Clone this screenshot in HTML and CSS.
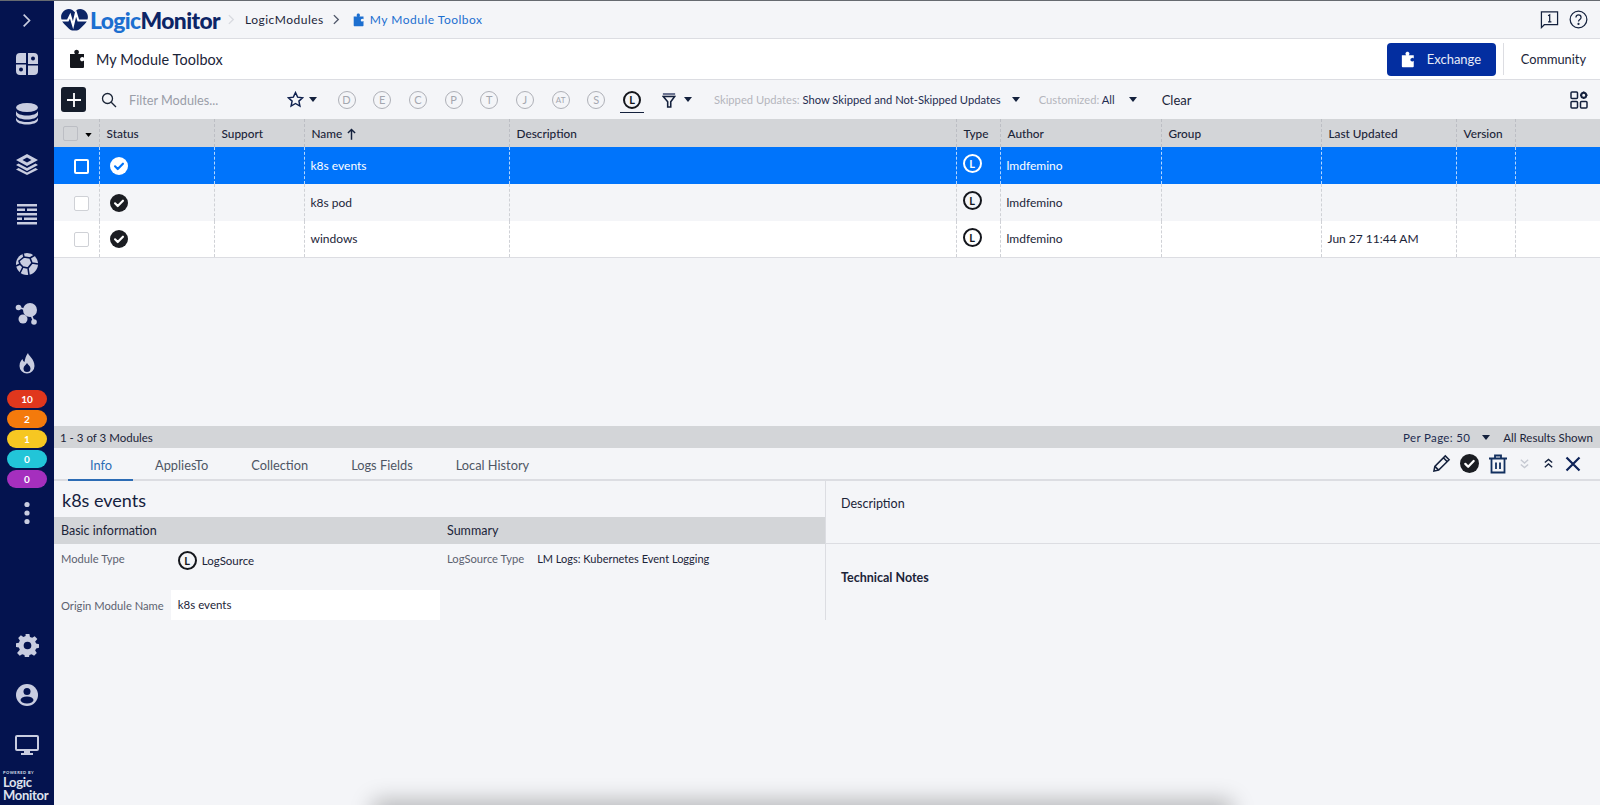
FILE: index.html
```html
<!DOCTYPE html>
<html lang="en">
<head>
  <meta charset="UTF-8">
  <title>My Module Toolbox - LogicMonitor</title>
  <link rel="stylesheet" href="styles.css">
</head>
<body>
  <svg class="defs" width="0" height="0">
    <symbol id="puzzle" viewBox="0 0 20 20">
      <path d="M1 5h5.200c-.9-.9-1-1.700-.9-2.300C5.500 1.500 6.600.800 7.600.800s2.100.7 2.300 1.900c.1.600 0 1.400-.9 2.300h6v3.800c-.5-.5-1.200-.8-1.900-.7-1.100.1-2 1-2 2.100s.9 2 2 2.100c.7.100 1.400-.2 1.900-.7V18a1 1 0 0 1-1 1H2a1 1 0 0 1-1-1z"/>
    </symbol>
    <symbol id="check" viewBox="0 0 20 20">
      <path d="M5.600 10.400l3 3 5.800-6" fill="none" stroke-width="2.400" stroke-linecap="round" stroke-linejoin="round"/>
    </symbol>
    <symbol id="caret" viewBox="0 0 8 5">
      <path d="M0 0h8L4 5z"/>
    </symbol>
  </svg>

  <nav class="sidebar">
    <div class="side-top">
      <svg viewBox="0 0 12 18" width="10" height="15" fill="none" stroke="#c9cde0" stroke-width="2"><path d="M2 2l7 7-7 7"/></svg>
    </div>
    <div class="side-item">
      <svg viewBox="0 0 24 24" width="24" height="24"><path d="M1 5a4 4 0 0 1 4-4h6v10H1zM13 1h6a4 4 0 0 1 4 4v7H13zM1 12.500h10V23H5a4 4 0 0 1-4-4zM13 13.500h10V19a4 4 0 0 1-4 4h-6z"/><circle cx="18" cy="6.500" r="2" fill="#04134f"/><circle cx="6" cy="17.500" r="2" fill="#04134f"/></svg>
    </div>
    <div class="side-item">
      <svg viewBox="0 0 24 24" width="24" height="24"><ellipse cx="12" cy="5.500" rx="11" ry="4.500"/><path d="M1 9c1 3 5.500 4.500 11 4.500S22 12 23 9v4c-1 3-5.500 4.500-11 4.500S2 16 1 13z"/><path d="M1 15.500c1 3 5.500 4.500 11 4.500s10-1.500 11-4.500V18c-.5 3-5.500 4.500-11 4.500S1.500 21 1 18z"/></svg>
    </div>
    <div class="side-item">
      <svg viewBox="0 0 24 24" width="24" height="24"><path d="M12 2l11 6-11 6L1 8zM12 5.500L7.500 8l4.500 2.500L16.500 8z" fill-rule="evenodd"/><path d="M3.500 11.500L12 16l8.500-4.500 2.500 1.500-11 6-11-6z"/><path d="M3.500 16L12 20.500 20.500 16l2.500 1.500-11 5.500-11-5.500z"/></svg>
    </div>
    <div class="side-item">
      <svg viewBox="0 0 24 24" width="24" height="24"><path d="M2 2h20v2.500H2zM2 6.500h8V9H2zM12 6.500h10V9H12zM2 11h20v2.500H2zM2 15.500h5V18H2zM9 15.500h13V18H9zM2 20h20v2.500H2z"/></svg>
    </div>
    <div class="side-item">
      <svg viewBox="0 0 24 24" width="24" height="24"><circle cx="12" cy="12" r="11"/><path d="M4 9l5-4 6 1 2 5-4 5-5-1-3-3zM9 5l-1-4M15 6l5-3M17 11l6 1M13 16l1 7M8 15l-3 6M5 12L1 14" fill="none" stroke="#04134f" stroke-width="1.600"/></svg>
    </div>
    <div class="side-item">
      <svg viewBox="0 0 24 24" width="24" height="24"><circle cx="15" cy="8" r="7"/><circle cx="8" cy="17" r="4.500"/><circle cx="3.500" cy="5.500" r="2.800"/><circle cx="19" cy="20" r="2.800"/><path d="M3.500 5.500L12 8M15 10l4 10" stroke="#c9cde0" stroke-width="1.800"/></svg>
    </div>
    <div class="side-item">
      <svg viewBox="0 0 24 24" width="24" height="24"><path fill-rule="evenodd" d="M13 1c.5 3 6.500 6 6.500 13a7.500 7.500 0 0 1-15 0c0-4 2-6 3-7 .3 1.500 1 2.500 2 3 .5-3 1.500-6.500 3.500-9zM12 11c-.8 1.500-3.500 3-3.500 5.500a3.500 3.500 0 0 0 7 0c0-2.500-2.700-4-3.500-5.500z"/></svg>
    </div>
    <div class="badges">
      <span class="badge red">10</span>
      <span class="badge orange">2</span>
      <span class="badge yellow">1</span>
      <span class="badge cyan">0</span>
      <span class="badge purple">0</span>
    </div>
    <div class="side-item">
      <svg viewBox="0 0 6 24" width="6" height="24"><circle cx="3" cy="3.500" r="2.600"/><circle cx="3" cy="12" r="2.600"/><circle cx="3" cy="20.500" r="2.600"/></svg>
    </div>
    <div class="side-bottom">
      <div class="side-item">
        <svg viewBox="0 0 24 24" width="23" height="23"><path fill-rule="evenodd" d="M10 0h4l.6 3 2.300 1 2.600-1.700 2.800 2.800L20 7.700l1 2.300 3 .6v3.800l-3 .6-1 2.300 1.700 2.600-2.800 2.800-2.600-1.700-2.300 1-.6 3h-4l-.6-3-2.300-1-2.600 1.700-2.800-2.800L4 16.400 3 14.100l-3-.6V9.700l3-.6 1-2.300L2.300 4.100l2.800-2.800L7.700 3l2.300-1zM12 8a4 4 0 1 0 0 8 4 4 0 0 0 0-8z"/></svg>
      </div>
      <div class="side-item">
        <svg viewBox="0 0 24 24" width="24" height="24"><circle cx="12" cy="12" r="11"/><circle cx="12" cy="8.500" r="3.500" fill="#04134f"/><ellipse cx="12" cy="17" rx="6.500" ry="3.500" fill="#04134f"/></svg>
      </div>
      <div class="side-item">
        <svg viewBox="0 0 24 22" width="24" height="22"><path fill-rule="evenodd" d="M2 1h20a2 2 0 0 1 2 2v12a2 2 0 0 1-2 2h-7v2h3v2H6v-2h3v-2H2a2 2 0 0 1-2-2V3a2 2 0 0 1 2-2zm0 2v12h20V3z"/></svg>
      </div>
      <div class="powered">
        <span class="powered-by">POWERED BY</span>
        <span class="powered-name">Logic<br>Monitor</span>
      </div>
    </div>
  </nav>

  <main class="main">
    <header class="topbar">
      <svg class="logo-mark" viewBox="0 0 28 24" width="27" height="23">
        <path d="M8 1c3 0 5 1.500 6 3.500C15 2.500 17 1 20 1c4.500 0 8 4 8 8.500 0 3-1.500 5.500-3.500 7.500l-5 5c-1 1-2 1.500-3 1.500h-5c-1 0-2-.5-3-1.500l-5-5C1.500 15 0 12.500 0 9.500 0 5 3.500 1 8 1z" fill="#0c2566"/>
        <path d="M0 13h7l2.500-5 3 10 3-13 2.500 8h10" fill="none" stroke="#fff" stroke-width="2.200"/>
      </svg>
      <span class="logo-text"><b>Logic</b>Monitor</span>
      <svg class="crumb-sep pale" viewBox="0 0 8 12" width="7" height="11"><path d="M1 1l5 5-5 5" fill="none" stroke-width="1.600"/></svg>
      <span class="crumb">LogicModules</span>
      <svg class="crumb-sep" viewBox="0 0 8 12" width="7" height="11"><path d="M1 1l5 5-5 5" fill="none" stroke-width="1.600"/></svg>
      <svg class="crumb-icon" width="14" height="14"><use href="#puzzle"/></svg>
      <span class="crumb current">My Module Toolbox</span>
      <div class="top-right">
        <svg viewBox="0 0 20 20" width="19" height="19" fill="none" stroke="#14213d" stroke-width="1.300"><path d="M1.500 2h17v13.500h-14l-3 3z"/><path d="M8.500 6l1.700-1v7.500M8.500 12.500h3.500"/></svg>
        <svg viewBox="0 0 20 20" width="19" height="19" fill="none" stroke="#14213d" stroke-width="1.300"><circle cx="10" cy="10" r="8.800"/><path d="M7.300 7.800c0-3.400 5.400-3.400 5.400 0 0 2.200-2.700 2-2.700 4.400" /><circle cx="10" cy="14.700" r=".5"/></svg>
      </div>
    </header>

    <section class="titlebar">
      <svg class="title-icon" width="20" height="20"><use href="#puzzle"/></svg>
      <h1>My Module Toolbox</h1>
      <div class="title-right">
        <button class="exchange">
          <svg width="17" height="17"><use href="#puzzle"/></svg>
          Exchange
        </button>
        <a class="community">Community</a>
      </div>
    </section>

    <section class="toolbar">
      <button class="add">
        <svg viewBox="0 0 16 16" width="16" height="16" stroke="#fff" stroke-width="1.800"><path d="M8 1v14M1 8h14"/></svg>
      </button>
      <svg class="search-icon" viewBox="0 0 16 16" width="16" height="16" fill="none" stroke="#1a2436" stroke-width="1.300"><circle cx="6.500" cy="6.500" r="5"/><path d="M10.200 10.200L15 15"/></svg>
      <span class="filter-input">Filter Modules...</span>
      <svg class="star" viewBox="0 0 20 20" width="17" height="17" fill="none" stroke="#0d1f4d" stroke-width="1.700"><path d="M10 1.800l2.500 5.400 5.900.7-4.400 4 1.200 5.800-5.200-3-5.200 3L6 11.900l-4.400-4 5.900-.7z"/></svg>
      <svg class="caret star-caret" width="8" height="5"><use href="#caret"/></svg>
      <div class="letters">
        <span class="letter">D</span>
        <span class="letter">E</span>
        <span class="letter">C</span>
        <span class="letter">P</span>
        <span class="letter">T</span>
        <span class="letter">J</span>
        <span class="letter small">AT</span>
        <span class="letter">S</span>
        <span class="letter active">L</span>
      </div>
      <svg class="funnel" viewBox="0 0 16 18" width="14" height="16"><path d="M1 1h14v2.500H1z" fill="#6b7390"/><path d="M1.500 5h13L10 11v6H6.500v-6z" fill="none" stroke="#14213d" stroke-width="1.800"/></svg>
      <svg class="caret funnel-caret" width="8" height="5"><use href="#caret"/></svg>
      <span class="tool-label skipped"><em>Skipped Updates:</em> Show Skipped and Not-Skipped Updates</span>
      <svg class="caret skipped-caret" width="8" height="5"><use href="#caret"/></svg>
      <span class="tool-label customized"><em>Customized:</em> All</span>
      <svg class="caret custom-caret" width="8" height="5"><use href="#caret"/></svg>
      <span class="clear">Clear</span>
      <svg class="columns-icon" viewBox="0 0 18 18" width="18" height="18" fill="none" stroke="#14213d" stroke-width="1.500"><rect x="1" y="1" width="6.500" height="6.500" rx="1"/><rect x="1" y="10.500" width="6.500" height="6.500" rx="1"/><rect x="10.500" y="10.500" width="6.500" height="6.500" rx="1"/><circle cx="13.700" cy="4.200" r="2.500" stroke-width="2"/><path d="M13.700.5v1M13.700 7v1M10 4.200h1M16.500 4.200h1"/></svg>
    </section>

    <section class="grid-wrap">
      <table class="grid">
        <colgroup>
          <col class="c-check"><col class="c-status"><col class="c-support"><col class="c-name"><col class="c-desc"><col class="c-type"><col class="c-author"><col class="c-group"><col class="c-updated"><col class="c-version"><col>
        </colgroup>
        <thead>
          <tr>
            <th class="check-cell"><span class="box head-box"></span><svg class="caret" width="7" height="4"><use href="#caret"/></svg></th>
            <th>Status</th>
            <th>Support</th>
            <th>Name <svg class="sort" viewBox="0 0 10 13" width="9" height="12" fill="none" stroke="#14213d" stroke-width="1.600"><path d="M5 13V1.500M1 5.500l4-4 4 4"/></svg></th>
            <th>Description</th>
            <th>Type</th>
            <th>Author</th>
            <th>Group</th>
            <th>Last Updated</th>
            <th>Version</th>
            <th></th>
          </tr>
        </thead>
        <tbody>
          <tr class="selected">
            <td class="check-cell"><span class="box"></span></td>
            <td><span class="status"><svg width="18" height="18"><use href="#check"/></svg></span></td>
            <td></td><td>k8s events</td><td></td>
            <td><span class="type-l">L</span></td>
            <td>lmdfemino</td><td></td><td></td><td></td><td></td>
          </tr>
          <tr>
            <td class="check-cell"><span class="box"></span></td>
            <td><span class="status"><svg width="18" height="18"><use href="#check"/></svg></span></td>
            <td></td><td>k8s pod</td><td></td>
            <td><span class="type-l">L</span></td>
            <td>lmdfemino</td><td></td><td></td><td></td><td></td>
          </tr>
          <tr class="white">
            <td class="check-cell"><span class="box"></span></td>
            <td><span class="status"><svg width="18" height="18"><use href="#check"/></svg></span></td>
            <td></td><td>windows</td><td></td>
            <td><span class="type-l">L</span></td>
            <td>lmdfemino</td><td></td><td>Jun 27 11:44 AM</td><td></td><td></td>
          </tr>
        </tbody>
      </table>
    </section>

    <section class="pager">
      <span>1 - 3 of 3 Modules</span>
      <div class="pager-right">
        <span class="per-page">Per Page: 50</span>
        <svg class="caret" width="8" height="5"><use href="#caret"/></svg>
        <span>All Results Shown</span>
      </div>
    </section>

    <section class="detail">
      <div class="tabs">
        <a class="tab active">Info</a>
        <a class="tab">AppliesTo</a>
        <a class="tab">Collection</a>
        <a class="tab">Logs Fields</a>
        <a class="tab">Local History</a>
        <div class="tab-actions">
          <svg viewBox="0 0 20 20" width="19" height="19" fill="none" stroke="#14213d" stroke-width="1.600"><path d="M2 18l1-5L14 2l4 4L7 17zM12 4l4 4M3 13l4 4"/></svg>
          <span class="status"><svg width="19" height="19"><use href="#check"/></svg></span>
          <svg viewBox="0 0 20 20" width="20" height="20" fill="none" stroke="#12305f" stroke-width="1.800"><path d="M1 4.500h18M7 4V1.500h6V4M3.500 5v13.500h13V5M8 8.500v6.500M12 8.500v6.500"/></svg>
          <svg class="chev" viewBox="0 0 12 12" width="11" height="11" fill="none" stroke="#c6c9d2" stroke-width="1.500"><path d="M2 2l4 3.500L10 2M2 7l4 3.500L10 7"/></svg>
          <svg class="chev" viewBox="0 0 12 12" width="11" height="11" fill="none" stroke="#14213d" stroke-width="1.500"><path d="M2 5l4-3.500L10 5M2 10l4-3.500L10 10"/></svg>
          <svg viewBox="0 0 16 16" width="16" height="16" fill="none" stroke="#0e2358" stroke-width="2.200"><path d="M1.500 1.500l13 13M14.500 1.500l-13 13"/></svg>
        </div>
      </div>

      <div class="detail-body">
        <div class="detail-left">
          <h2>k8s events</h2>
          <div class="section-heads">
            <span>Basic information</span>
            <span>Summary</span>
          </div>
          <div class="info-cols">
            <div class="info-basic">
              <div class="field module-type">
                <label>Module Type</label>
                <div class="value"><span class="type-l">L</span> LogSource</div>
              </div>
              <div class="field origin">
                <label>Origin Module Name</label>
                <div class="origin-input">k8s events</div>
              </div>
            </div>
            <div class="info-summary">
              <label>LogSource Type</label>
              <span>LM Logs: Kubernetes Event Logging</span>
            </div>
          </div>
        </div>
        <div class="detail-right">
          <div class="desc">Description</div>
          <div class="notes">Technical Notes</div>
        </div>
      </div>
      <div class="bottom-shadow"></div>
    </section>
  </main>
</body>
</html>
```

FILE: styles.css
```css
* {
  box-sizing: border-box;
}
html, body {
  height: 100%;
}
body {
  display: flex;
  margin: 0;
  overflow: hidden;
  font-family: Lato, "Open Sans", sans-serif;
  font-size: 12px;
  color: #1b2438;
  background: #f4f5f8;
  border-top: 1px solid #666a70;
}
.defs {
  position: absolute;
}
button {
  font-family: inherit;
}

/* left nav */
.sidebar {
  display: flex;
  flex-direction: column;
  flex: 0 0 54px;
  align-items: center;
  background: #04134f;
  fill: #c9cde0;
}
.side-top {
  display: flex;
  align-items: center;
  justify-content: center;
  height: 38px;
}
.side-item {
  display: flex;
  align-items: center;
  justify-content: center;
  width: 100%;
  height: 50px;
}
.badges {
  display: flex;
  flex-direction: column;
  gap: 2px;
  margin-top: 1px;
  width: 40px;
}
.badge {
  height: 18px;
  border-radius: 9px;
  color: #fff;
  font-size: 10px;
  font-weight: 700;
  line-height: 18px;
  text-align: center;
}
.red { background: #e0371d; }
.orange { background: #f47a0c; }
.yellow { background: #f6c722; }
.cyan { background: #22c5d8; }
.purple { background: #a52fbe; }
.side-bottom {
  display: flex;
  flex-direction: column;
  width: 100%;
  margin-top: auto;
}
.powered {
  height: 35px;
  padding-left: 3px;
  color: #dfe2ee;
}
.powered-by {
  display: block;
  font-size: 4px;
  font-weight: 700;
  letter-spacing: .5px;
  line-height: 6px;
}
.powered-name {
  display: block;
  font-size: 13px;
  font-weight: 700;
  line-height: 13px;
  letter-spacing: -.3px;
}

/* main column */
.main {
  display: flex;
  flex-direction: column;
  flex: 1;
  min-width: 0;
}
.topbar {
  display: flex;
  align-items: center;
  flex: 0 0 38px;
  padding-left: 7px;
  border-bottom: 1px solid #dcdde2;
}
.logo-mark {
  flex: none;
}
.logo-text {
  margin-left: 2px;
  font-size: 22.800px;
  font-weight: 900;
  letter-spacing: -.6px;
  color: #0c2566;
}
.logo-text b {
  color: #1c6fd0;
  font-weight: 900;
}
.crumb-sep {
  margin: 0 8px 0 9px;
  stroke: #50586a;
}
.crumb-sep.pale {
  margin-left: 8px;
  margin-right: 10px;
  stroke: #d8dae0;
}
.crumb-icon {
  margin: 0 3px 0 5px;
  fill: #1c6fd0;
}
.crumb {
  font-size: 12px;
  letter-spacing: .5px;
}
.crumb.current {
  letter-spacing: .5px;
  color: #1c6fd0;
}
.top-right {
  display: flex;
  gap: 10px;
  margin-left: auto;
  padding-right: 12px;
}
.titlebar {
  display: flex;
  align-items: center;
  flex: 0 0 41px;
  padding-left: 15px;
  background: #fff;
  border-bottom: 1px solid #dcdde2;
}
.title-icon {
  fill: #14161c;
}
h1 {
  margin: 0 0 0 7px;
  font-size: 14.400px;
  font-weight: 400;
  letter-spacing: .1px;
}
.title-right {
  display: flex;
  align-items: center;
  margin-left: auto;
  height: 100%;
}
.exchange {
  display: flex;
  align-items: center;
  gap: 9px;
  width: 109px;
  height: 33px;
  padding-left: 14px;
  border: 0;
  border-radius: 4px;
  background: #032ea0;
  color: #e8ecf8;
  font-size: 13px;
  fill: #fff;
}
.community {
  margin-left: 7px;
  padding: 8px 14px 8px 17px;
  border-left: 1px solid #dcdde2;
  font-size: 12.800px;
}

/* filter row */
.toolbar {
  display: flex;
  align-items: center;
  flex: 0 0 39px;
  padding-left: 7px;
  fill: #14213d;
}
.add {
  display: flex;
  align-items: center;
  justify-content: center;
  width: 25px;
  height: 25px;
  padding: 0;
  border: 0;
  border-radius: 3px;
  background: #151d2b;
}
.search-icon {
  margin-left: 15px;
}
.filter-input {
  width: 158px;
  margin-left: 12px;
  color: #9a9ea8;
  font-size: 12.700px;
}
.star-caret {
  margin-left: 5px;
}
.letters {
  display: flex;
  align-items: center;
  gap: 17.700px;
  margin-left: 20.500px;
}
.letter {
  display: flex;
  flex: none;
  align-items: center;
  justify-content: center;
  width: 18px;
  height: 18px;
  border: 1.500px solid #aeb0b7;
  border-radius: 50%;
  color: #a4a7af;
  font-size: 11px;
}
.letter.small {
  font-size: 8px;
}
.letter.active {
  position: relative;
  border: 2px solid #14161c;
  color: #14161c;
  font-size: 11px;
  font-weight: 700;
}
.letter.active::after {
  content: "";
  position: absolute;
  left: -5px;
  right: -5px;
  bottom: -6px;
  border-bottom: 1px solid #14213d;
}
.funnel {
  margin-left: 21px;
}
.funnel-caret {
  margin-left: 8px;
}
.tool-label {
  font-size: 11.200px;
  color: #1e2c50;
}
.tool-label em {
  color: #b4b6bd;
  font-style: normal;
}
.skipped {
  margin-left: 22px;
}
.skipped-caret {
  margin-left: 11px;
}
.customized {
  margin-left: 19px;
}
.custom-caret {
  margin-left: 14px;
}
.clear {
  margin-left: 25px;
  font-size: 13px;
}
.columns-icon {
  margin-left: auto;
  margin-right: 12px;
}

/* modules table */
.grid-wrap {
  flex: 0 0 307px;
}
.grid {
  width: 100%;
  border-collapse: collapse;
  table-layout: fixed;
}
.c-check { width: 45px; }
.c-status { width: 115px; }
.c-support { width: 90px; }
.c-name { width: 205px; }
.c-desc { width: 447px; }
.c-type { width: 44px; }
.c-author { width: 161px; }
.c-group { width: 160px; }
.c-updated { width: 135px; }
.c-version { width: 59px; }
th {
  height: 28px;
  padding: 0 7px;
  background: #d3d5d8;
  font-weight: 500;
  font-size: 11.800px;
  text-align: left;
  border-right: 1px dashed #bcbec4;
}
th:last-child, td:last-child {
  border-right: 0;
}
td {
  height: 37px;
  padding: 0 6px;
  border-right: 1px dashed #cfd1d6;
}
.check-cell {
  padding: 0 0 0 9px;
}
td.check-cell {
  padding-left: 20px;
}
.white td {
  height: 36px;
  background: #fff;
  border-bottom: 1px solid #dcdde2;
}
.selected td {
  background: #0074fb;
  color: #fff;
  border-right-color: #b4d6ff;
}
.box {
  display: inline-block;
  width: 15px;
  height: 15px;
  border: 1.500px solid #cfd1d6;
  border-radius: 2px;
  background: #fff;
  vertical-align: middle;
}
.head-box {
  margin-right: 7px;
  background: #d3d5d8;
  border-color: #bcbec4;
}
.selected .box {
  border: 2px solid #fff;
  background: #0074fb;
}
.status {
  display: inline-flex;
  margin-left: 4px;
  border-radius: 50%;
  background: #1b1d22;
  stroke: #fff;
  vertical-align: middle;
}
.selected .status {
  background: #fff;
  stroke: #0074fb;
}
.type-l {
  display: inline-flex;
  align-items: center;
  justify-content: center;
  width: 19px;
  height: 19px;
  margin: -5px 0 0 0;
  border: 2px solid #14161c;
  border-radius: 50%;
  color: #14161c;
  font-size: 11px;
  font-weight: 700;
  vertical-align: middle;
}
.selected .type-l {
  border-color: #fff;
  color: #fff;
}
.sort {
  margin-left: 2px;
  vertical-align: -2px;
}

.pager {
  display: flex;
  align-items: center;
  justify-content: space-between;
  flex: 0 0 22px;
  padding: 0 7px 0 6px;
  background: #d3d5d8;
  font-size: 11.500px;
}
.pager-right {
  display: flex;
  align-items: center;
  gap: 12px;
}
.pager-right .caret {
  margin: 0 1px 0 0;
  fill: #14213d;
}
.per-page {
  color: #1e2c50;
  letter-spacing: .35px;
}

/* bottom panel */
.detail {
  position: relative;
  flex: 1;
}
.tabs {
  display: flex;
  height: 33px;
  padding-left: 14px;
  border-bottom: 2px solid #dcdde2;
}
.tab {
  height: 33px;
  padding: 9px 21px 0 22px;
  color: #4e5564;
  font-size: 12.800px;
}
.tab.active {
  color: #2c6cb5;
  border-bottom: 2px solid #2c6cb5;
}
.tab-actions {
  display: flex;
  align-items: center;
  gap: 9px;
  margin-left: auto;
  padding-right: 19px;
}
.tab-actions .status {
  margin: 0;
}
.chev {
  margin: 0 2px;
}
.detail-body {
  display: flex;
  height: 139px;
}
.detail-left {
  flex: 0 0 772px;
  border-right: 1px solid #dcdde2;
}
h2 {
  height: 36px;
  margin: 0;
  padding: 8px 0 0 8px;
  font-size: 18px;
  font-weight: 400;
  color: #14213d;
}
.section-heads {
  display: grid;
  grid-template-columns: 386px 1fr;
  height: 27px;
  padding-left: 7px;
  background: #d3d5d8;
  font-size: 12.500px;
  line-height: 27px;
}
.info-cols {
  display: grid;
  grid-template-columns: 393px 1fr;
}
label {
  color: #5c6270;
  font-size: 11.200px;
}
.field {
  display: flex;
  align-items: center;
  padding-left: 7px;
}
.module-type {
  height: 46px;
  padding-bottom: 14px;
}
.module-type label {
  margin-bottom: 3px;
}
.module-type .value {
  display: flex;
  align-items: center;
  gap: 5px;
  margin-left: 53px;
  font-size: 11.500px;
}
.module-type .type-l {
  margin: 0;
}
.origin-input {
  width: 269px;
  height: 30px;
  margin-left: 7px;
  padding-left: 7px;
  background: #fff;
  line-height: 30px;
  font-size: 11.500px;
}
.info-summary {
  display: flex;
  gap: 13px;
  padding-top: 8px;
  font-size: 11px;
}
.detail-right {
  flex: 1;
}
.desc {
  height: 63px;
  padding: 15px 0 0 15px;
  border-bottom: 1px solid #dcdde2;
  font-size: 12.500px;
}
.notes {
  padding: 26px 0 0 15px;
  font-size: 12.500px;
  font-weight: 700;
}
.bottom-shadow {
  position: absolute;
  left: 325px;
  width: 847px;
  bottom: -12px;
  height: 10px;
  box-shadow: 0 0 22px 6px rgba(0, 0, 0, .28);
}
```
